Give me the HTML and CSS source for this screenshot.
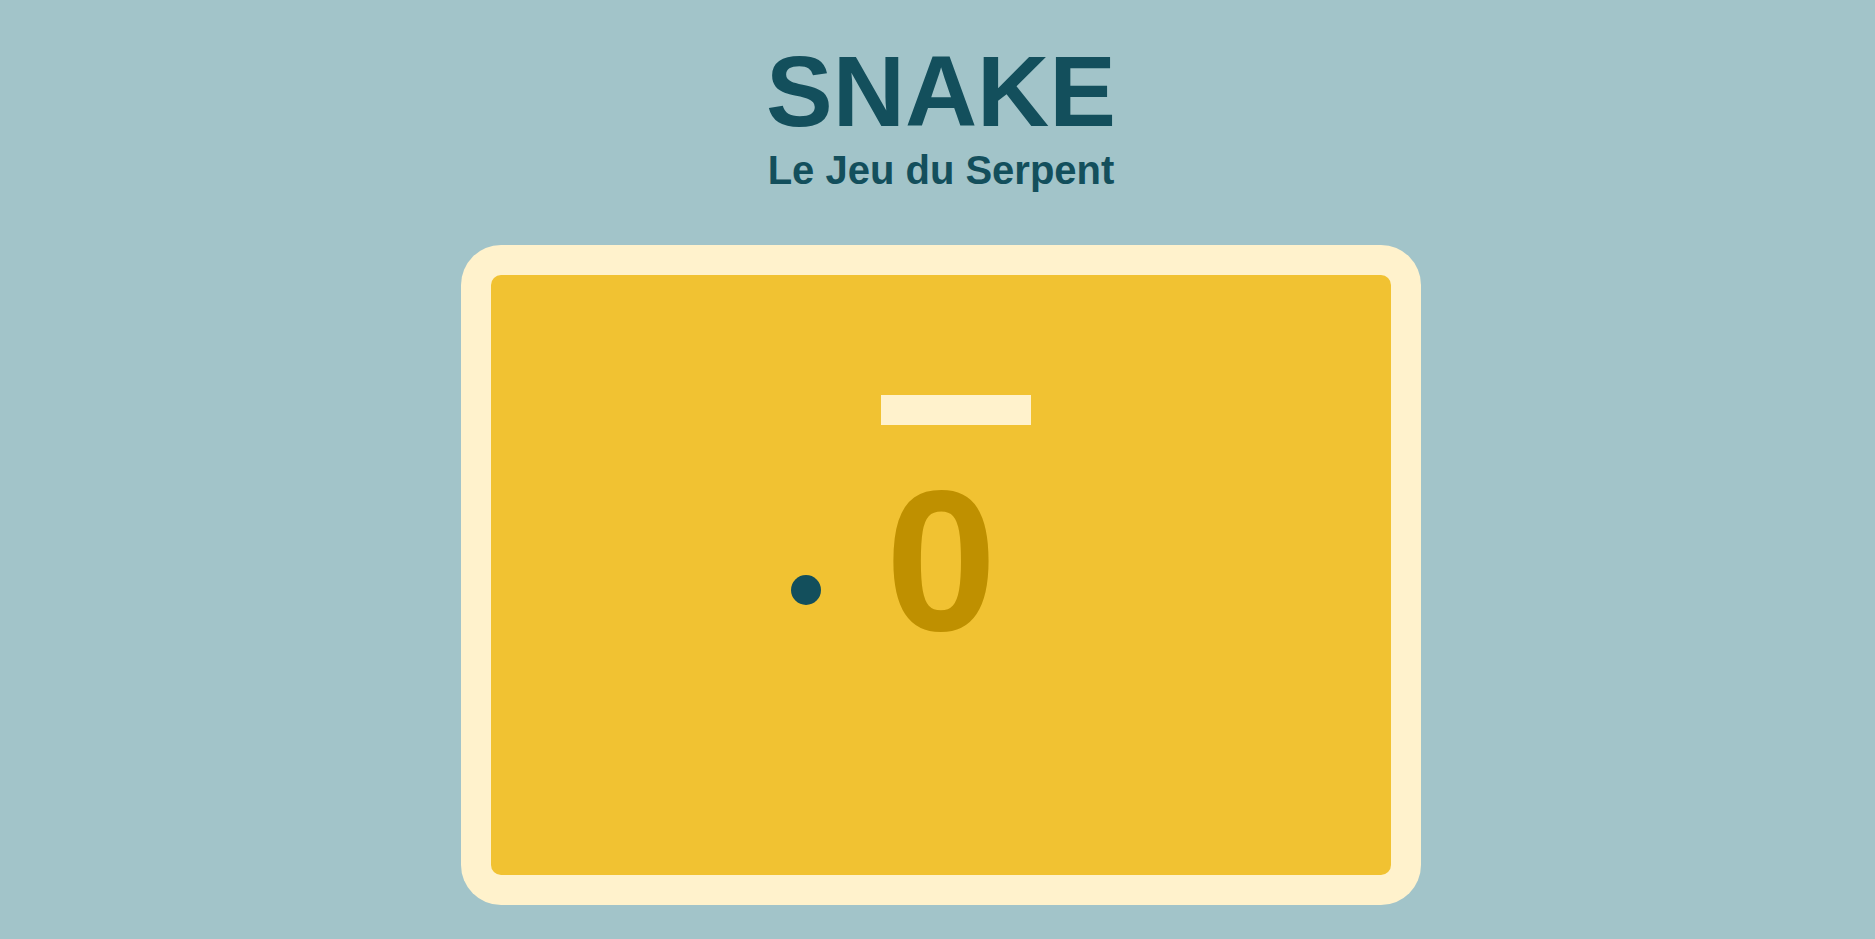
FILE: index.html
```html
<!DOCTYPE html>
<html lang="fr">

<head>
  <meta charset="UTF-8">
  <meta name="viewport" content="width=device-width, initial-scale=1.0">
  <title>Snake</title>
  <link rel="stylesheet" href="styles.css">
</head>

<body>
  <header>
    <h1 class="title">SNAKE</h1>
    <p class="subtitle">Le Jeu du Serpent</p>
  </header>
  <div class="frame">
    <!-- plateau 30 x 20 cases de 30px -->
    <div class="board" id="board">
      <div class="score" id="score">0</div>
      <div class="food" style="grid-area: 11 / 11;"></div>
      <div class="segment" style="grid-area: 5 / 14;"></div>
      <div class="segment" style="grid-area: 5 / 15;"></div>
      <div class="segment" style="grid-area: 5 / 16;"></div>
      <div class="segment" style="grid-area: 5 / 17;"></div>
      <div class="segment" style="grid-area: 5 / 18;"></div>
    </div>
  </div>
</body>

</html>
```

FILE: styles.css
```css
body {
  margin: 0 0 0 7px;
  background-color: #a2c4c9;
  font-family: "Liberation Sans", Arial, sans-serif;
  color: #134f5c;
  text-align: center;
}

.title {
  font-size: 100px;
  line-height: 115px;
  margin: 34px 0 0;
}

.subtitle {
  font-size: 40px;
  font-weight: bold;
  line-height: 46px;
  margin: -2px 0 0;
}

.frame {
  width: 900px;
  margin: 52px auto 0;
  padding: 30px;
  border-radius: 40px;
  background-color: #fff2cc;
}

.board {
  height: 600px;
  border-radius: 10px;
  background-color: #f1c232;
  display: grid;
  grid-template-columns: repeat(30, 30px);
  grid-template-rows: repeat(20, 30px);
}

.score {
  grid-area: 1 / 1 / -1 / -1;
  align-self: start;
  margin-top: 186px;
  font-size: 200px;
  font-weight: bold;
  line-height: 200px;
  color: #bf9000;
}

.segment {
  background-color: #fff2cc;
}

.food {
  border-radius: 50%;
  background-color: #134f5c;
}
```
